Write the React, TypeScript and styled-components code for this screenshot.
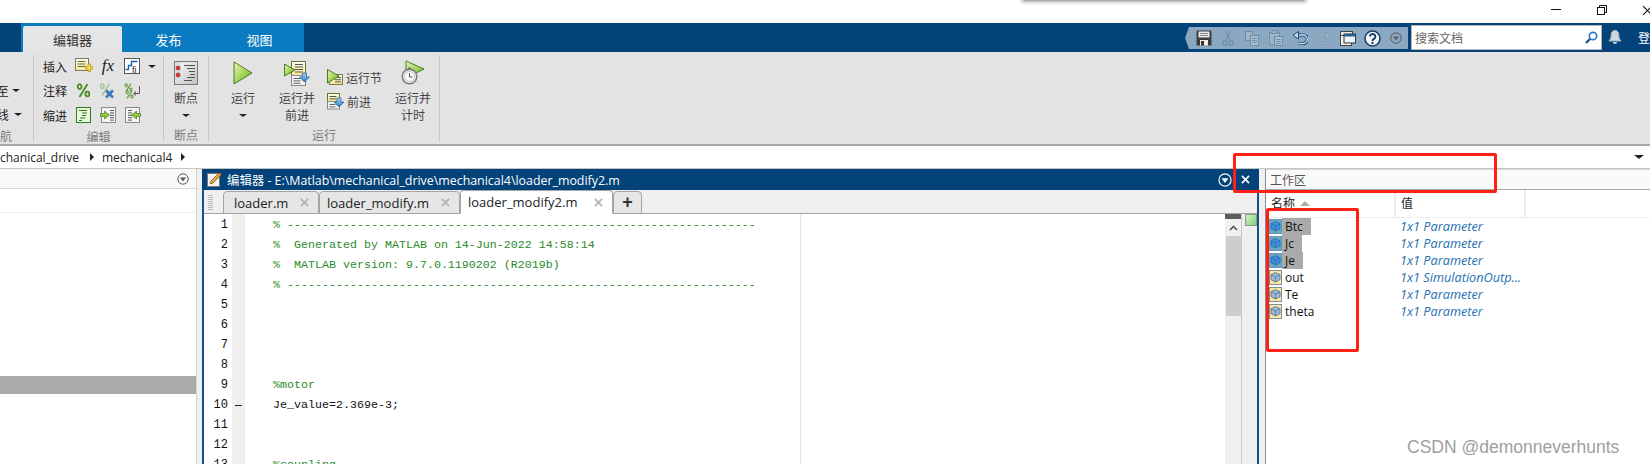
import React from "react";
import styled, { createGlobalStyle } from "styled-components";

const Global = createGlobalStyle`
  html, body { margin: 0; padding: 0; background: #fff; overflow: hidden; }
  #root { width: 1650px; height: 464px; }
  * { box-sizing: border-box; }
`;

const UI = `"Open Sans", "Noto Sans CJK SC", sans-serif`;
const CJK = `"Noto Sans CJK SC", "Open Sans", sans-serif`;

const Page = styled.div`
  position: relative;
  width: 1650px;
  height: 464px;
  overflow: hidden;
  background: #fff;
  font-family: ${UI};
  font-size: 12px;
`;

/* window title bar */
const TitleBar = styled.div`
  height: 23px;
  display: flex;
  justify-content: flex-end;
  margin-right: -20px;
  background: #fff;
`;
const WinBtn = styled.div`
  width: 45.5px;
  height: 20px;
  display: flex;
  align-items: center;
  justify-content: center;
`;
const MenuShadow = styled.div`
  position: absolute;
  left: 1022px;
  top: -12px;
  width: 284px;
  height: 12px;
  background: #fff;
  box-shadow: 0 1px 4px rgba(0, 0, 0, 0.55);
`;

/* tab strip */
const TabBar = styled.div`
  height: 29px;
  display: flex;
  background: #03437a;
  padding-left: 21px;
`;
const TabGroup = styled.div`
  width: 283px;
  display: flex;
  align-items: flex-end;
  padding-left: 2px;
  background: #0a7bc1;
`;
const Tab = styled.div<{ $active?: boolean; $w: number }>`
  width: ${(p) => p.$w}px;
  height: 26px;
  display: flex;
  align-items: center;
  justify-content: center;
  font: 13px ${CJK};
  color: ${(p) => (p.$active ? "#333" : "#fff")};
  background: ${(p) => (p.$active ? "#e5e5e5" : "transparent")};
  border-radius: 2px 2px 0 0;
`;
const QuickBar = styled.div`
  margin-left: 881px;
  margin-top: 4px;
  width: 223px;
  height: 22px;
  display: flex;
  padding-left: 7px;
  background: #8aa8c1;
  clip-path: polygon(4px 0, 100% 0, 100% 100%, 4px 100%, 0 50%);
`;
const QuickSlot = styled.div`
  width: 24px;
  display: flex;
  align-items: center;
  justify-content: center;
`;
const Search = styled.div`
  margin-left: 3px;
  margin-top: 2px;
  width: 192px;
  height: 25px;
  display: flex;
  align-items: center;
  justify-content: space-between;
  padding: 0 3px 0 3px;
  background: #fff;
  border: 1px solid #b5b5b5;
  font: 12px ${CJK};
  color: #666;
`;
const Bell = styled.div`
  margin-left: 6px;
  margin-top: 6px;
  width: 14px;
`;
const Login = styled.div`
  margin-left: 16px;
  flex: none;
  font: 12px/29px ${CJK};
  color: #fff;
`;

/* ribbon */
const Ribbon = styled.div`
  height: 94px;
  display: flex;
  background: #e3e3e3;
  border-bottom: 2px solid #a8a8a8;
`;
const Group = styled.div<{ $w: number }>`
  width: ${(p) => p.$w}px;
  height: 87px;
  margin-top: 3px;
  display: flex;
  flex-direction: column;
  border-right: 1px solid #c8c8c8;
  overflow: hidden;
`;
const GroupBody = styled.div<{ $clip?: boolean }>`
  flex: 1;
  display: flex;
  margin-top: -1px;
  justify-content: ${(p) => (p.$clip ? "flex-end" : "flex-start")};
`;
const GroupLabel = styled.div<{ $clip?: boolean }>`
  height: 16px;
  font: 12px/17px ${CJK};
  color: #7c7c7c;
  display: flex;
  justify-content: ${(p) => (p.$clip ? "flex-start" : "center")};
  white-space: nowrap;
`;
const ClipStack = styled.div`
  width: 33px;
  display: flex;
  flex-direction: column;
  padding-top: 24px;
`;
const ClipRow = styled.div`
  height: 24.5px;
  display: flex;
  align-items: center;
  justify-content: flex-end;
  color: #222;
  font: 12px ${CJK};
  white-space: nowrap;
  overflow: hidden;
`;
const EditGrid = styled.div`
  display: grid;
  grid-template-columns: 29px 24px 24px 24px 16px;
  grid-auto-rows: 24.5px;
  padding-left: 9px;
  align-items: center;
  justify-items: center;
  font: 12px ${CJK};
  color: #222;
`;
const RowLabel = styled.span`
  justify-self: start;
`;
const Fx = styled.span`
  font: italic 17px "Liberation Serif", serif;
  color: #222;
`;
const LargeBtn = styled.div<{ $w: number; $x?: number }>`
  width: ${(p) => p.$w}px;
  margin-left: ${(p) => p.$x ?? 0}px;
  display: flex;
  flex-direction: column;
  align-items: center;
  padding-top: 6px;
  font: 12px/18px ${CJK};
  color: #444;
`;
const LargeIcon = styled.div`
  height: 26px;
  margin-bottom: 3px;
  display: flex;
  align-items: center;
  justify-content: center;
`;
const Drop = styled.div`
  height: 17px;
  display: flex;
  align-items: center;
`;
const SecondLine = styled.span`
  margin-top: -1px;
`;
const Caret = styled.span<{ $c?: string; $s?: number }>`
  display: inline-block;
  width: 0;
  height: 0;
  border-left: ${(p) => p.$s ?? 4}px solid transparent;
  border-right: ${(p) => p.$s ?? 4}px solid transparent;
  border-top: ${(p) => (p.$s ?? 4) - 1}px solid ${(p) => p.$c ?? "#222"};
`;
const SmallCol = styled.div`
  width: 64px;
  margin-left: 9px;
  padding-top: 15px;
  display: flex;
  flex-direction: column;
  gap: 8px;
`;
const SmallBtn = styled.div`
  height: 16px;
  display: flex;
  align-items: center;
  gap: 3px;
  font: 12px ${CJK};
  color: #444;
`;

/* address */
const Address = styled.div`
  height: 23px;
  display: flex;
  align-items: center;
  background: #fff;
  border-bottom: 1px solid #c4c4c4;
  padding-right: 6px;
  font: 12px ${UI};
  color: #222;
`;
const Crumb = styled.span<{ $w: number }>`
  width: ${(p) => p.$w}px;
  white-space: nowrap;
`;
const Sep = styled.span`
  width: 0;
  height: 0;
  margin: 0 8px 0 8px;
  border-top: 4px solid transparent;
  border-bottom: 4px solid transparent;
  border-left: 4px solid #222;
`;
const AddressEnd = styled.div`
  margin-left: auto;
  display: flex;
  align-items: center;
`;

/* main panes */
const Main = styled.div`
  height: 295px;
  display: flex;
  background: #efefef;
`;
const LeftPane = styled.div`
  width: 196px;
  background: #fff;
`;
const LeftHead = styled.div`
  height: 20px;
  display: flex;
  align-items: center;
  justify-content: flex-end;
  padding-right: 7px;
  background: #f9f9f9;
  border-bottom: 1px solid #d8d8d8;
`;
const LeftSub = styled.div`
  height: 24px;
  border-bottom: 1px solid #eee;
`;
const LeftSelected = styled.div`
  height: 18px;
  margin-top: 163px;
  background: #aaa;
`;
const Splitter = styled.div`
  width: 6px;
  background: #f0f0f0;
  border-left: 1px solid #d4d4d4;
`;
const Editor = styled.div`
  width: 1057px;
  display: flex;
  flex-direction: column;
  border-left: 2px solid #14508f;
  border-right: 2px solid #14508f;
`;
const EditorTitle = styled.div`
  height: 21px;
  margin-left: -2px;
  margin-right: -2px;
  display: flex;
  align-items: center;
  padding-left: 5px;
  background: #03437a;
  color: #fff;
  font: 12.4px ${UI};
`;
const TitleText = styled.span`
  margin-left: 5px;
`;
const TitleTools = styled.div`
  margin-left: auto;
  display: flex;
  align-items: center;
  gap: 9px;
  padding-right: 9px;
`;
const TabRow = styled.div`
  height: 24px;
  flex: none;
  display: flex;
  align-items: flex-end;
  padding-left: 4px;
  background: #efefef;
  border-bottom: 1px solid #a5a5a5;
`;
const Grip = styled.div`
  width: 5px;
  height: 15px;
  margin: 0 10px 3px 0;
  background: repeating-linear-gradient(#bbb 0 1px, transparent 1px 2px);
`;
const DocTab = styled.div<{ $active?: boolean; $w: number; $pad: number }>`
  width: ${(p) => p.$w}px;
  height: ${(p) => (p.$active ? 24 : 23)}px;
  margin-bottom: -1px;
  display: flex;
  align-items: center;
  justify-content: space-between;
  padding: 0 9px 0 ${(p) => p.$pad}px;
  background: ${(p) => (p.$active ? "#fff" : "#e6e6e6")};
  border: 1px solid #a5a5a5;
  border-bottom: ${(p) => (p.$active ? "1px solid #fff" : "1px solid #a5a5a5")};
  border-radius: 4px 4px 0 0;
  font: 13px ${UI};
  color: #222;
`;
const PlusTab = styled(DocTab)`
  justify-content: center;
  padding: 0;
  font: bold 18px "Liberation Sans", sans-serif;
  color: #333;
`;
const EditorBody = styled.div`
  flex: 1;
  min-height: 0;
  display: flex;
  overflow: hidden;
`;
const Gutter = styled.div`
  width: 28px;
  background: #fff;
  padding: 1px 4px 0 0;
  text-align: right;
  font: 12px/20px "Liberation Mono", monospace;
  color: #111;
`;
const Marks = styled.div`
  width: 13px;
  background: #efefef;
  padding: 1px 0 0 3px;
  font: 12px/20px "Liberation Mono", monospace;
  color: #111;
`;
const MarkRow = styled.div`
  height: 20px;
  display: flex;
  align-items: center;
`;
const Dash = styled.span`
  width: 7px;
  height: 1px;
  background: #222;
`;
const Code = styled.div`
  flex: 1;
  padding: 1px 0 0 28px;
  background: linear-gradient(#e4e4e4, #e4e4e4) no-repeat 555px 0 / 1px 100%, #fff;
  font: 11.67px/20px "Liberation Mono", monospace;
`;
const CodeLine = styled.div<{ $comment?: boolean }>`
  height: 20px;
  white-space: pre;
  color: ${(p) => (p.$comment ? "#2b8a2b" : "#111")};
`;
const ScrollBar = styled.div`
  width: 16px;
  background: #f0f0f0;
  display: flex;
  flex-direction: column;
  align-items: center;
`;
const ScrollCap = styled.div`
  width: 100%;
  height: 5px;
  background: #5c5c5c;
`;
const ScrollArrow = styled.div`
  height: 17px;
  display: flex;
  align-items: center;
  justify-content: center;
`;
const ScrollThumb = styled.div`
  width: 15px;
  height: 80px;
  background: #cdcdcd;
`;
const Overview = styled.div`
  width: 16px;
  padding: 0 0 0 3px;
  background: #efefef;
  border-left: 1px solid #c8c8c8;
`;
const StatusBox = styled.div`
  width: 12px;
  height: 12px;
  background: linear-gradient(135deg, #d4f1c8, #7fd07a);
  border: 1px solid #8a9a8a;
`;

const Workspace = styled.div`
  flex: 1;
  display: flex;
  flex-direction: column;
  margin-left: 6px;
  border-left: 1px solid #8c8c8c;
  background: #fff;
  min-width: 0;
`;
const WsHead = styled.div`
  height: 21px;
  display: flex;
  align-items: center;
  padding-left: 4px;
  background: #fafafa;
  border-top: 1px solid #d8d8d8;
  border-bottom: 1px solid #a8a8a8;
  font: 12px ${CJK};
  color: #555;
`;
const WsCols = styled.div`
  height: 28px;
  flex: none;
  display: flex;
  border-bottom: 1px solid #eee;
  font: 12px ${CJK};
  color: #222;
`;
const WsCol = styled.div<{ $w: number; $pad: number }>`
  width: ${(p) => p.$w}px;
  display: flex;
  align-items: center;
  gap: 5px;
  padding: 0 0 2px ${(p) => p.$pad}px;
  border-right: 2px solid #ececec;
`;
const WsRow = styled.div`
  height: 17px;
  display: flex;
  align-items: center;
`;
const WsName = styled.div`
  width: 128px;
  display: flex;
  align-items: center;
  padding-left: 3px;
  gap: 0;
`;
const NameLabel = styled.span<{ $sel?: boolean }>`
  height: 17px;
  padding: 0 8px 0 3px;
  font: 12px/17px ${UI};
  color: #111;
  background: ${(p) => (p.$sel ? "#aaa" : "transparent")};
`;
const WsValue = styled.span`
  padding-left: 6px;
  font: italic 12.7px/17px ${UI};
  color: #1f6fb0;
  white-space: nowrap;
`;

/* overlays */
const RedBox = styled.div<{ $l: number; $t: number; $w: number; $h: number }>`
  position: absolute;
  left: ${(p) => p.$l}px;
  top: ${(p) => p.$t}px;
  width: ${(p) => p.$w}px;
  height: ${(p) => p.$h}px;
  border: 3px solid #ff2015;
  border-radius: 2px;
  pointer-events: none;
`;
const Watermark = styled.div`
  position: absolute;
  left: 1407px;
  top: 435px;
  font: 17.5px/24px "Liberation Sans", sans-serif;
  color: #a0a0a0;
  white-space: nowrap;
`;

/* ---------- icons ---------- */
const Gradients = styled.svg`
  position: absolute;
  width: 0;
  height: 0;
`;
const Defs = () => (
  <Gradients>
    <defs>
      <linearGradient id="gPlay" x1="0" y1="0" x2="1" y2="1">
        <stop offset="0" stopColor="#e6f4b8" />
        <stop offset="0.6" stopColor="#9ccf4d" />
        <stop offset="1" stopColor="#5ea51a" />
      </linearGradient>
      <linearGradient id="gNote" x1="0" y1="0" x2="0" y2="1">
        <stop offset="0" stopColor="#fffdf0" />
        <stop offset="1" stopColor="#f7e58a" />
      </linearGradient>
      <linearGradient id="gGrey" x1="0" y1="0" x2="1" y2="1">
        <stop offset="0" stopColor="#fafafa" />
        <stop offset="1" stopColor="#c2c2c2" />
      </linearGradient>
      <linearGradient id="gBlue" x1="0" y1="0" x2="0" y2="1">
        <stop offset="0" stopColor="#a8d4f4" />
        <stop offset="1" stopColor="#2d7cc0" />
      </linearGradient>
    </defs>
  </Gradients>
);

const Lines = ({ x, y, n, w, c = "#666", gap = 2 }: { x: number; y: number; n: number; w: number; c?: string; gap?: number }) => (
  <>
    {Array.from({ length: n }).map((_, i) => (
      <path key={i} d={`M${x} ${y + i * gap + 0.5}h${w}`} stroke={c} strokeWidth="1" />
    ))}
  </>
);

const PlayShape = ({ d }: { d: string }) => <path d={d} fill="url(#gPlay)" stroke="#4d7c20" strokeWidth="1" strokeLinejoin="round" />;

const IconNoteAdd = () => (
  <svg width="18" height="18" viewBox="0 0 18 18">
    <rect x="0.5" y="1.5" width="13" height="12" fill="url(#gNote)" stroke="#7a7a6a" />
    <Lines x={2.5} y={4} n={3} w={8} c="#6a6a4a" gap={2.5} />
    <path d="M10.5 9.5h2.5v-2.5h2.5v2.5h2.5v2.5h-2.5v2.5h-2.5v-2.5h-2.5z" fill="#f6d84f" stroke="#b09a20" strokeWidth="0.8" />
  </svg>
);
const IconStep = () => (
  <svg width="16" height="16" viewBox="0 0 16 16">
    <rect x="0.5" y="0.5" width="15" height="15" fill="#fff" stroke="#555" />
    <path d="M1.5 11.5h3v-4h3v-4h6" fill="none" stroke="#1c62b0" strokeWidth="1.4" />
    <text x="8" y="14.5" fontSize="9" fontFamily="Liberation Sans" fill="#222">fi</text>
  </svg>
);
const Pct = ({ c, x = 0, y = 0, s = 1 }: { c: string; x?: number; y?: number; s?: number }) => (
  <g transform={`translate(${x} ${y}) scale(${s})`} fill="none" stroke={c} strokeWidth="1.8">
    <ellipse cx="3.6" cy="3.6" rx="1.9" ry="2.4" />
    <ellipse cx="11.4" cy="11" rx="1.9" ry="2.4" />
    <path d="M11.5 1 3.5 14" />
  </g>
);
const IconPct = () => (
  <svg width="16" height="16" viewBox="0 0 16 16"><Pct c="#4f8c1c" /></svg>
);
const IconPctX = () => (
  <svg width="18" height="16" viewBox="0 0 18 16">
    <Pct c="#a9c39a" s={0.9} />
    <path d="M7 7.5l7 7M14 7.5l-7 7" stroke="#3d7bb8" strokeWidth="2.6" />
  </svg>
);
const IconPctWrap = () => (
  <svg width="17" height="16" viewBox="0 0 17 16">
    <Pct c="#5f9a3a" s={0.6} x={0} y={0} />
    <Pct c="#5f9a3a" s={0.6} x={1} y={7} />
    <path d="M15.5 3v7.5H10M12 8.5l-2.5 2 2.5 2" fill="none" stroke="#555" strokeWidth="1" />
  </svg>
);
const IconSmart = () => (
  <svg width="16" height="16" viewBox="0 0 16 16">
    <rect x="0.5" y="0.5" width="14" height="15" fill="#eaf6de" stroke="#2e7d1e" />
    <Lines x={3} y={3} n={1} w={8} c="#2e7d1e" />
    <Lines x={6} y={5.5} n={1} w={5} c="#2e7d1e" />
    <Lines x={6} y={8} n={1} w={4} c="#2e7d1e" />
    <Lines x={4} y={10.5} n={1} w={5} c="#2e7d1e" />
    <Lines x={3} y={13} n={1} w={3} c="#2e7d1e" />
  </svg>
);
const IconIndent = ({ flip }: { flip?: boolean }) => (
  <svg width="17" height="16" viewBox="0 0 17 16">
    <rect x="1.5" y="0.5" width="14" height="15" fill="#f4f4f4" stroke="#8a8a8a" />
    <Lines x={flip ? 4 : 10} y={3} n={5} w={4} c="#555" gap={2.4} />
    <path
      d={flip ? "M16.5 6.5h-4v-2.5l-5 4 5 4v-2.5h4z" : "M0.5 6.5h4v-2.5l5 4-5 4v-2.5h-4z"}
      fill="#8ec63f"
      stroke="#4a7f1c"
      strokeWidth="0.7"
    />
  </svg>
);
const IconBreak = () => (
  <svg width="24" height="24" viewBox="0 0 24 24">
    <rect x="0.5" y="0.5" width="23" height="23" fill="url(#gGrey)" stroke="#777" />
    <rect x="1" y="1" width="6" height="22" fill="#dcdcdc" />
    <circle cx="4" cy="7" r="2" fill="#d33" stroke="#922" strokeWidth="0.6" />
    <circle cx="4" cy="14" r="2" fill="#d33" stroke="#922" strokeWidth="0.6" />
    <Lines x={10} y={4} n={1} w={11} c="#555" />
    <Lines x={13} y={7} n={1} w={8} c="#555" />
    <Lines x={15} y={10} n={1} w={6} c="#555" />
    <Lines x={16} y={13} n={1} w={5} c="#555" />
    <Lines x={13} y={16} n={1} w={8} c="#555" />
    <Lines x={10} y={19} n={1} w={8} c="#555" />
  </svg>
);
const IconRun = () => (
  <svg width="20" height="24" viewBox="0 0 20 24"><PlayShape d="M1 1 19 12 1 23z" /></svg>
);
const DownArrow = ({ x, y }: { x: number; y: number }) => (
  <path transform={`translate(${x} ${y})`} d="M3 0h4v4h3l-5 5-5-5h3z" fill="url(#gBlue)" stroke="#1f5f9e" strokeWidth="0.7" />
);
const IconRunAdvance = () => (
  <svg width="26" height="25" viewBox="0 0 26 25">
    <rect x="7.5" y="0.5" width="14" height="14" fill="url(#gNote)" stroke="#5a7a3a" />
    <Lines x={11} y={3} n={4} w={8} c="#555" gap={2.5} />
    <rect x="7.5" y="14.5" width="14" height="10" fill="#f2f2f2" stroke="#8a8a8a" />
    <Lines x={9.5} y={17} n={3} w={7} c="#666" gap={2.4} />
    <PlayShape d="M0.5 3 11 9 0.5 15z" />
    <DownArrow x={15.5} y={12} />
  </svg>
);
const IconRunSection = () => (
  <svg width="16" height="16" viewBox="0 0 16 16">
    <rect x="2.5" y="5.5" width="13" height="10" fill="url(#gNote)" stroke="#7a7a4a" />
    <Lines x={8} y={8} n={3} w={6} c="#555" gap={2.2} />
    <PlayShape d="M0.5 0.5 12 7 0.5 14z" />
  </svg>
);
const IconAdvance = () => (
  <svg width="17" height="17" viewBox="0 0 17 17">
    <rect x="0.5" y="0.5" width="12" height="8" fill="url(#gNote)" stroke="#5a7a3a" />
    <rect x="0.5" y="8.5" width="12" height="7.5" fill="#f2f2f2" stroke="#8a8a8a" />
    <Lines x={2.5} y={3} n={2} w={7} c="#555" gap={2.4} />
    <Lines x={2.5} y={11} n={2} w={6} c="#666" gap={2.4} />
    <DownArrow x={7} y={5} />
  </svg>
);
const IconRunTime = () => (
  <svg width="24" height="26" viewBox="0 0 24 26">
    <PlayShape d="M5 1 23 9 5 18z" />
    <circle cx="8.5" cy="16.5" r="7.3" fill="#e8e8e8" stroke="#777" strokeWidth="1.4" />
    <circle cx="8.5" cy="16.5" r="5" fill="#fafafa" stroke="#aaa" strokeWidth="0.6" />
    <path d="M8.5 13v4h3" fill="none" stroke="#555" strokeWidth="1" />
    <rect x="7" y="7.5" width="3" height="2" fill="#777" />
  </svg>
);

const IconSave = () => (
  <svg width="16" height="16" viewBox="0 0 16 16">
    <path d="M0.5 0.5h15v15h-15z" fill="#3c3c3c" />
    <rect x="2.5" y="1.5" width="11" height="6" fill="#e9e9e9" />
    <Lines x={4} y={3} n={2} w={8} c="#888" />
    <rect x="4" y="10" width="8" height="5.5" fill="#eee" />
    <rect x="5" y="11" width="3" height="4.5" fill="#333" />
  </svg>
);
const IconCut = () => (
  <svg width="12" height="16" viewBox="0 0 12 16" fill="none" stroke="#6f8da8" strokeWidth="1.1">
    <path d="M9 0.5 4 10.5M3.5 0.5 8 10.5" />
    <ellipse cx="3" cy="13" rx="2" ry="2.4" />
    <ellipse cx="9" cy="13" rx="2" ry="2.4" />
  </svg>
);
const IconCopy = () => (
  <svg width="14" height="15" viewBox="0 0 14 15" fill="#a0b5c8" stroke="#6f8da8">
    <rect x="0.5" y="0.5" width="7" height="9" />
    <rect x="5.5" y="4.5" width="8" height="10" fill="#aec0d0" />
    <Lines x={7} y={7} n={3} w={5} c="#6f8da8" gap={2} />
  </svg>
);
const IconPaste = () => (
  <svg width="14" height="16" viewBox="0 0 14 16" fill="#a0b5c8" stroke="#6f8da8">
    <rect x="0.5" y="2.5" width="10" height="12" />
    <rect x="3" y="0.5" width="5" height="3" />
    <rect x="5.5" y="6.5" width="8" height="9" fill="#aec0d0" />
    <Lines x={7} y={9} n={3} w={5} c="#6f8da8" gap={2} />
  </svg>
);
const IconUndo = ({ off }: { off?: boolean }) => (
  <svg width="16" height="14" viewBox="0 0 16 14" fill="none">
    <g transform={off ? "matrix(-1 0 0 1 16 0)" : undefined}>
      <path d="M5.5 4H11a4.200 4.200 0 0 1 0 8.500H6" stroke={off ? "#7f99b0" : "#17456f"} strokeWidth="3.200" />
      <path d="M5.5 4H11a4.200 4.200 0 0 1 0 8.500H6" stroke={off ? "#9eb3c6" : "#bfe0f7"} strokeWidth="1.400" />
      <path d="M6.500 .5 1 4.200l5.500 3.800z" fill={off ? "#9eb3c6" : "#bfe0f7"} stroke={off ? "#7f99b0" : "#17456f"} strokeWidth="1" />
    </g>
  </svg>
);
const IconWindows = () => (
  <svg width="16" height="15" viewBox="0 0 16 15">
    <rect x="0.5" y="0.5" width="12" height="10" fill="#e8e8e8" stroke="#444" />
    <rect x="0.5" y="4.5" width="11" height="10" fill="#f3f3f3" stroke="#444" />
    <rect x="4" y="3" width="11.5" height="9" fill="#eef3f7" stroke="#333" />
    <rect x="4" y="3" width="11.5" height="2.5" fill="#2e5f8e" />
  </svg>
);
const IconHelp = () => (
  <svg width="17" height="17" viewBox="0 0 17 17">
    <circle cx="8.5" cy="8.5" r="7.5" fill="#f6f8fa" stroke="#17406a" strokeWidth="1.6" />
    <path d="M5.800 6.600a2.800 2.600 0 1 1 4.200 2.300c-1 .6-1.500 1-1.500 2" fill="none" stroke="#17406a" strokeWidth="1.900" />
    <circle cx="8.500" cy="13" r="1.200" fill="#17406a" />
  </svg>
);
const IconDropCircle = ({ stroke = "#5c5c5c", fill = "transparent", tri = "#5c5c5c", size = 12 }: { stroke?: string; fill?: string; tri?: string; size?: number }) => (
  <svg width={size} height={size} viewBox="0 0 12 12">
    <circle cx="6" cy="6" r="5.200" fill={fill} stroke={stroke} strokeWidth="1" />
    <path d="M3 4.500h6L6 8.500z" fill={tri} />
  </svg>
);
const IconMag = () => (
  <svg width="13" height="13" viewBox="0 0 13 13" fill="none">
    <circle cx="8" cy="5" r="3.700" stroke="#2b7cc8" strokeWidth="1.700" />
    <path d="M5 8 1 12" stroke="#14448a" strokeWidth="2.200" />
  </svg>
);
const IconBell = () => (
  <svg width="14" height="16" viewBox="0 0 14 16">
    <path d="M7 1.500c-2.800 0-3.800 2-3.800 4.500 0 3-.9 4.500-2.200 6h12c-1.300-1.500-2.200-3-2.200-6C10.800 3.500 9.800 1.500 7 1.500z" fill="#cfd6dc" stroke="#aab2ba" />
    <path d="M5 13h4a2 2 0 0 1-4 0z" fill="#cfd6dc" />
  </svg>
);
const IconPencil = () => (
  <svg width="15" height="15" viewBox="0 0 15 15">
    <rect x="0.500" y="1.500" width="12" height="13" fill="#f4f4f4" stroke="#777" />
    <path d="M3 12 4 9l8-8 2 2-8 8z" fill="#e8a33a" stroke="#7a4a10" strokeWidth="0.700" />
    <path d="M12 1l2 2 .8-.8-2-2z" fill="#d04a3a" />
  </svg>
);
const IconClose = ({ c, s = 9, w = 1.8 }: { c: string; s?: number; w?: number }) => (
  <svg width={s} height={s} viewBox="0 0 10 10">
    <path d="M1 1l8 8M9 1 1 9" stroke={c} strokeWidth={w} fill="none" />
  </svg>
);
const IconCube = ({ kind }: { kind: "sel" | "plain" }) => (
  <svg width="13" height="15" viewBox="0 0 13 15">
    <rect x="0.500" y="0.500" width="12" height="14" fill={kind === "sel" ? "#6aa7bf" : "#fbe7a0"} stroke={kind === "sel" ? "#5f9bc4" : "#7d8ea0"} />
    <path d="M6.500 2.500 11 4.700v5L6.500 12 2 9.700v-5z" fill={kind === "sel" ? "#3b8fdc" : "#9db9d6"} stroke={kind === "sel" ? "#2a6cab" : "#4e6d8d"} strokeWidth="0.800" />
    <path d="M2 4.700 6.500 7 11 4.700M6.500 7v5" fill="none" stroke={kind === "sel" ? "#2a6cab" : "#4e6d8d"} strokeWidth="0.700" />
  </svg>
);
const IconUp = () => (
  <svg width="9" height="6" viewBox="0 0 9 6">
    <path d="M1 5l3.500-3.500L8 5" fill="none" stroke="#555" strokeWidth="1.600" />
  </svg>
);
const SortUp = styled.span`
  width: 0;
  height: 0;
  border-left: 5px solid transparent;
  border-right: 5px solid transparent;
  border-bottom: 5px solid #b3ad9c;
  margin-top: 2px;
`;

/* ---------- data ---------- */
const dashes = "% " + "-".repeat(67);
const code: { t: string; c?: boolean; m?: boolean }[] = [
  { t: dashes, c: true },
  { t: "%  Generated by MATLAB on 14-Jun-2022 14:58:14", c: true },
  { t: "%  MATLAB version: 9.7.0.1190202 (R2019b)", c: true },
  { t: dashes, c: true },
  { t: "" },
  { t: "" },
  { t: "" },
  { t: "" },
  { t: "%motor", c: true },
  { t: "Je_value=2.369e-3;", m: true },
  { t: "" },
  { t: "" },
  { t: "%coupling", c: true },
];
const vars = [
  { n: "Btc", v: "1x1 Parameter", s: true },
  { n: "Jc", v: "1x1 Parameter", s: true },
  { n: "Je", v: "1x1 Parameter", s: true },
  { n: "out", v: "1x1 SimulationOutp..." },
  { n: "Te", v: "1x1 Parameter" },
  { n: "theta", v: "1x1 Parameter" },
];

export default function App() {
  return (
    <Page>
      <Global />
      <Defs />
      <TitleBar>
        <WinBtn>
          <svg width="10" height="2" viewBox="0 0 10 2"><path d="M0 .5h10" stroke="#111" /></svg>
        </WinBtn>
        <WinBtn>
          <svg width="10" height="10" viewBox="0 0 10 10" fill="none" stroke="#111">
            <path d="M2.500 2.500V.5h7v7h-2" />
            <rect x="0.500" y="2.500" width="7" height="7" />
          </svg>
        </WinBtn>
        <WinBtn>
          <IconClose c="#111" s={11} w={1} />
        </WinBtn>
      </TitleBar>

      <TabBar>
        <TabGroup>
          <Tab $active $w={99}>编辑器</Tab>
          <Tab $w={93}>发布</Tab>
          <Tab $w={89}>视图</Tab>
        </TabGroup>
        <QuickBar>
          <QuickSlot><IconSave /></QuickSlot>
          <QuickSlot><IconCut /></QuickSlot>
          <QuickSlot><IconCopy /></QuickSlot>
          <QuickSlot><IconPaste /></QuickSlot>
          <QuickSlot><IconUndo /></QuickSlot>
          <QuickSlot><IconUndo off /></QuickSlot>
          <QuickSlot><IconWindows /></QuickSlot>
          <QuickSlot><IconHelp /></QuickSlot>
          <QuickSlot><IconDropCircle /></QuickSlot>
        </QuickBar>
        <Search>
          <span>搜索文档</span>
          <IconMag />
        </Search>
        <Bell><IconBell /></Bell>
        <Login>登</Login>
      </TabBar>

      <Ribbon>
        <Group $w={34}>
          <GroupBody $clip>
            <ClipStack>
              <ClipRow>至&nbsp;<Caret />&nbsp;&nbsp;&nbsp;&nbsp;&nbsp;</ClipRow>
              <ClipRow>线&nbsp;&nbsp;<Caret />&nbsp;&nbsp;&nbsp;&nbsp;</ClipRow>
            </ClipStack>
          </GroupBody>
          <GroupLabel $clip>航</GroupLabel>
        </Group>
        <Group $w={130}>
          <GroupBody>
            <EditGrid>
              <RowLabel>插入</RowLabel>
              <IconNoteAdd />
              <Fx>fx</Fx>
              <IconStep />
              <Caret />
              <RowLabel>注释</RowLabel>
              <IconPct />
              <IconPctX />
              <IconPctWrap />
              <span />
              <RowLabel>缩进</RowLabel>
              <IconSmart />
              <IconIndent />
              <IconIndent flip />
              <span />
            </EditGrid>
          </GroupBody>
          <GroupLabel>编辑</GroupLabel>
        </Group>
        <Group $w={45}>
          <GroupBody>
            <LargeBtn $w={44}>
              <LargeIcon><IconBreak /></LargeIcon>
              <span>断点</span>
              <Drop><Caret /></Drop>
            </LargeBtn>
          </GroupBody>
          <GroupLabel>断点</GroupLabel>
        </Group>
        <Group $w={231}>
          <GroupBody>
            <LargeBtn $w={68}>
              <LargeIcon><IconRun /></LargeIcon>
              <span>运行</span>
              <Drop><Caret /></Drop>
            </LargeBtn>
            <LargeBtn $w={42} $x={-1}>
              <LargeIcon><IconRunAdvance /></LargeIcon>
              <span>运行并</span>
              <SecondLine>前进</SecondLine>
            </LargeBtn>
            <SmallCol>
              <SmallBtn><IconRunSection /><span>运行节</span></SmallBtn>
              <SmallBtn><IconAdvance /><span>前进</span></SmallBtn>
            </SmallCol>
            <LargeBtn $w={44}>
              <LargeIcon><IconRunTime /></LargeIcon>
              <span>运行并</span>
              <SecondLine>计时</SecondLine>
            </LargeBtn>
          </GroupBody>
          <GroupLabel>运行</GroupLabel>
        </Group>
      </Ribbon>

      <Address>
        <Crumb $w={82}>chanical_drive</Crumb>
        <Sep />
        <Crumb $w={71}>mechanical4</Crumb>
        <Sep />
        <AddressEnd><Caret $s={5} /></AddressEnd>
      </Address>

      <Main>
        <LeftPane>
          <LeftHead><IconDropCircle /></LeftHead>
          <LeftSub />
          <LeftSelected />
        </LeftPane>
        <Splitter />
        <Editor>
          <EditorTitle>
            <IconPencil />
            <TitleText>编辑器 - E:\Matlab\mechanical_drive\mechanical4\loader_modify2.m</TitleText>
            <TitleTools>
              <IconDropCircle stroke="#fff" tri="#fff" size={14} />
              <IconClose c="#fff" />
            </TitleTools>
          </EditorTitle>
          <TabRow>
            <Grip />
            <DocTab $w={96} $pad={10}><span>loader.m</span><IconClose c="#b0b0b0" /></DocTab>
            <DocTab $w={141} $pad={7}><span>loader_modify.m</span><IconClose c="#b0b0b0" /></DocTab>
            <DocTab $active $w={153} $pad={7}><span>loader_modify2.m</span><IconClose c="#b0b0b0" /></DocTab>
            <PlusTab $w={29} $pad={0}>+</PlusTab>
          </TabRow>
          <EditorBody>
            <Gutter>
              {code.map((_, i) => <div key={i}>{i + 1}</div>)}
            </Gutter>
            <Marks>
              {code.map((l, i) => <MarkRow key={i}>{l.m && <Dash />}</MarkRow>)}
            </Marks>
            <Code>
              {code.map((l, i) => <CodeLine key={i} $comment={l.c}>{l.t}</CodeLine>)}
            </Code>
            <ScrollBar>
              <ScrollCap />
              <ScrollArrow><IconUp /></ScrollArrow>
              <ScrollThumb />
            </ScrollBar>
            <Overview><StatusBox /></Overview>
          </EditorBody>
        </Editor>
        <Workspace>
          <WsHead>工作区</WsHead>
          <WsCols>
            <WsCol $w={130} $pad={5}>名称<SortUp /></WsCol>
            <WsCol $w={130} $pad={5}>值</WsCol>
          </WsCols>
          {vars.map((v) => (
            <WsRow key={v.n}>
              <WsName>
                <IconCube kind={v.s ? "sel" : "plain"} />
                <NameLabel $sel={v.s}>{v.n}</NameLabel>
              </WsName>
              <WsValue>{v.v}</WsValue>
            </WsRow>
          ))}
        </Workspace>
      </Main>

      <MenuShadow />
      <RedBox $l={1233} $t={153} $w={264} $h={40} />
      <RedBox $l={1266} $t={208} $w={93} $h={144} />
      <Watermark>CSDN @demonneverhunts</Watermark>
    </Page>
  );
}
